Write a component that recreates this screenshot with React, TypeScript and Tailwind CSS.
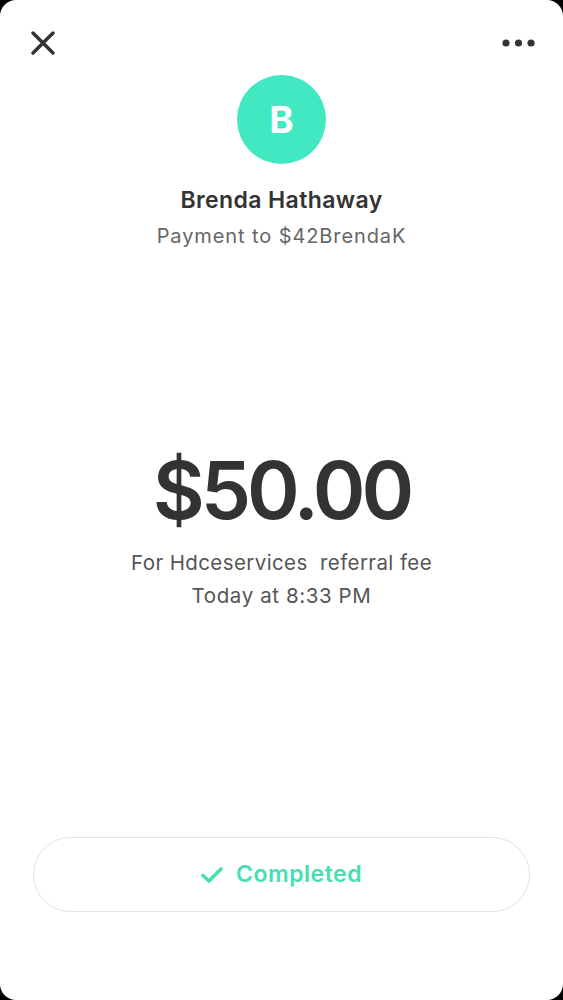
import React from "react";

export default function App() {
  return (
    <div className="w-[563px] h-[1000px] bg-black">
      <div
        className="h-full bg-white rounded-[16px] flex flex-col"
        style={{ fontFamily: "Inter, 'Noto Sans', sans-serif" }}
      >
        <div className="flex justify-between items-center px-[31px] pt-[31px] h-[55px]">
          <svg width="24" height="24" viewBox="0 0 24 24">
            <path d="M2 2 L22 22 M22 2 L2 22" stroke="#333" strokeWidth="3.4" strokeLinecap="round" />
          </svg>
          <svg width="36" height="10" viewBox="0 0 36 10" className="mr-[-5px]">
            <circle cx="5" cy="5" r="3.6" fill="#333" />
            <circle cx="17.5" cy="5" r="3.6" fill="#333" />
            <circle cx="30" cy="5" r="3.6" fill="#333" />
          </svg>
        </div>
        <div className="mt-[20px] mx-auto w-[89px] h-[89px] rounded-full bg-[#42e8c2] flex items-center justify-center text-white text-[37px] font-bold">
          B
        </div>
        <div className="mt-[22px] text-center text-[23px] leading-[28px] font-semibold text-[#333] tracking-[0.4px]">
          Brenda Hathaway
        </div>
        <div className="mt-[10px] text-center text-[20px] leading-[24px] text-[#666] tracking-[0.9px]">
          Payment to $42BrendaK
        </div>
        <div className="mt-[197px] text-center text-[80px] leading-[90px] font-semibold text-[#333] tracking-[-4px]">
          $50.00
        </div>
        <div className="mt-[13px] text-center text-[20.5px] leading-[30px] text-[#555] whitespace-pre tracking-[0.4px]">
          For Hdceservices  referral fee
        </div>
        <div className="mt-[3px] text-center text-[20.5px] leading-[30px] text-[#555] tracking-[0.6px]">
          Today at 8:33 PM
        </div>
        <div className="mt-[226px] mx-[33px] h-[75px] rounded-full border border-[#e2e2e2] flex items-center justify-center gap-[13px]">
          <svg width="22" height="16" viewBox="0 0 22 16">
            <path d="M2 8.5 L8 14 L20 2" stroke="#45dfb1" strokeWidth="3.6" fill="none" strokeLinecap="round" strokeLinejoin="round" />
          </svg>
          <span className="text-[23px] font-semibold text-[#45dfb1] tracking-[0.5px]">Completed</span>
        </div>
      </div>
    </div>
  );
}
